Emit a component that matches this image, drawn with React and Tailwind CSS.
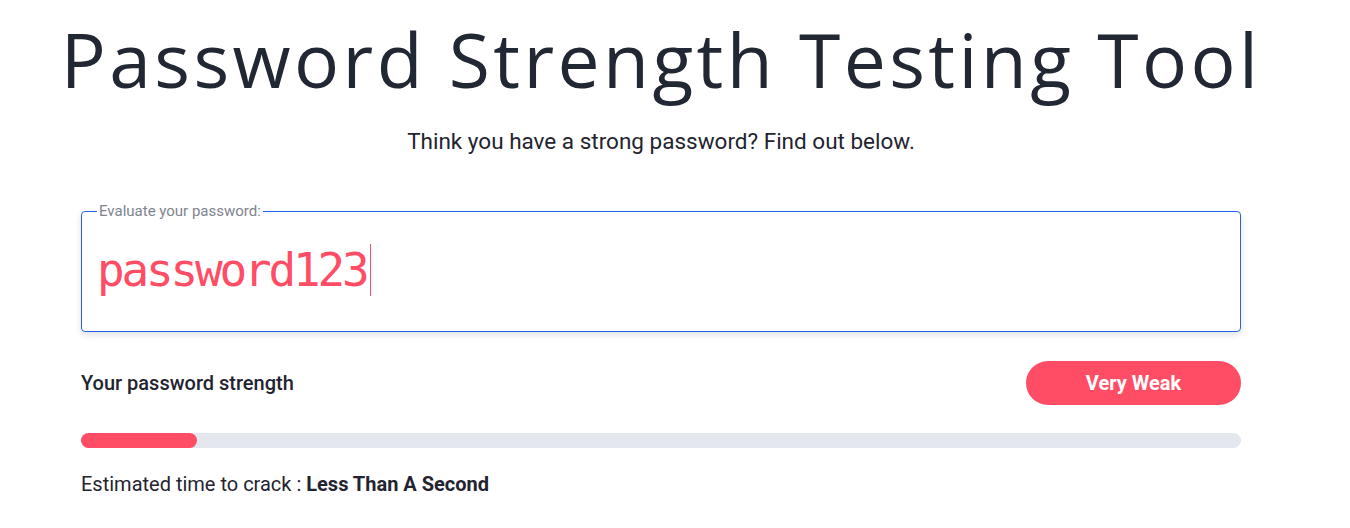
import React from "react";

const App = () => {
  const strength = 10;

  return (
    <div className="min-h-screen bg-white font-['Roboto',sans-serif] text-[#1f2430]">
      <div className="ml-[81px] w-[1160px] flex flex-col">
        {/* Heading */}
        <h1 className="-mx-[40px] whitespace-nowrap text-center font-['Open_Sans',sans-serif] text-[75px] leading-[1] font-normal text-[#212733] tracking-[3.4px] mt-[22px]">
          Password Strength Testing Tool
        </h1>
        <p className="text-center text-[22.5px] leading-[30px] text-[#1f2430] mt-[29px]">
          Think you have a strong password? Find out below.
        </p>

        {/* Password input */}
        <fieldset className="mt-[47px] border border-[#2563eb] rounded-[4px] h-[129px] shadow-[0_3px_6px_rgba(0,0,0,0.12)] px-[15px] pb-[10px]">
          <legend className="px-[2px] text-[15px] leading-[16px] text-[#80858f]">
            Evaluate your password:
          </legend>
          <div className="flex items-center mt-[25px]">
            <span className="font-['DejaVu_Sans_Mono',monospace] text-[46px] tracking-[-3.2px] leading-none text-[#ff4d66]">
              password123
            </span>
            <span className="ml-[4px] w-px h-[52px] bg-[#ff4d66]"></span>
          </div>
        </fieldset>

        {/* Strength row */}
        <div className="flex items-center justify-between mt-[29px]">
          <span className="text-[20px] font-medium text-[#1f2430]">
            Your password strength
          </span>
          <button className="w-[215px] h-[44px] rounded-full bg-[#ff4d66] text-white text-[20px] font-bold">
            Very Weak
          </button>
        </div>

        {/* Progress */}
        <div className="mt-[28px] w-full h-[15px] rounded-full bg-[#e4e7ee]">
          <div
            className="h-[15px] rounded-full bg-[#ff4d66]"
            style={{ width: `${strength}%` }}
          ></div>
        </div>

        <p className="mt-[22px] text-[20px] leading-[28px] text-[#1f2430]">
          Estimated time to crack : <span className="font-bold">Less Than A Second</span>
        </p>
      </div>
    </div>
  );
};

export default App;
